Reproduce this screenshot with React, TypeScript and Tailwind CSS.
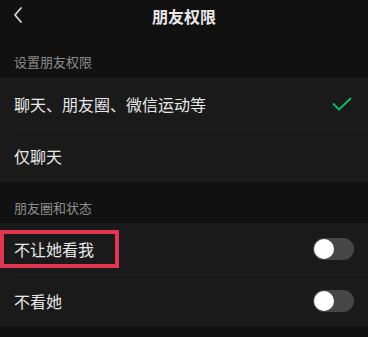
import React from 'react';

const font = { fontFamily: '"Noto Sans CJK SC", "Noto Sans", sans-serif' };

function Toggle() {
  return (
    <div className="w-[41px] h-[22px] rounded-full bg-[#474747] flex items-center px-[1px]">
      <div className="w-[20px] h-[20px] rounded-full bg-white" />
    </div>
  );
}

function Row({ label, right, last }: { label: React.ReactNode; right?: React.ReactNode; last?: boolean }) {
  return (
    <div className="h-[52px] flex items-center justify-between pl-[14px] pr-[14px] relative">
      <span className="text-[16px] text-[#e8e8e8]">{label}</span>
      {right}
      {!last && <div className="absolute bottom-0 left-[14px] right-0 h-px bg-[#222]" />}
    </div>
  );
}

export default function App() {
  return (
    <div className="w-[368px] h-[337px] bg-[#111111] overflow-hidden" style={font}>
      <div className="h-[31px] flex items-center justify-center relative">
        <svg className="absolute left-[12px] top-[6px]" width="12" height="18" viewBox="0 0 12 18" fill="none">
          <path d="M9 2 L3 9 L9 16" stroke="#d8d8d8" strokeWidth="1.8" strokeLinecap="round" strokeLinejoin="round" />
        </svg>
        <span className="text-[16px] font-bold text-[#e8e8e8]">朋友权限</span>
      </div>
      <div className="h-[47px] flex items-end pb-[7px] pl-[14px]">
        <span className="text-[13px] text-[#8c8c8c]">设置朋友权限</span>
      </div>
      <div className="bg-[#1a1a1a]">
        <Row
          label="聊天、朋友圈、微信运动等"
          right={
            <svg width="20" height="14" viewBox="0 0 20 14" fill="none" className="mr-[2px]">
              <path d="M1.5 7 L7 12.5 L18.5 1.5" stroke="#07c160" strokeWidth="1.8" strokeLinecap="round" strokeLinejoin="round" />
            </svg>
          }
        />
        <Row label="仅聊天" last />
      </div>
      <div className="h-[41px] flex items-end pb-[6px] pl-[14px]">
        <span className="text-[13px] text-[#8c8c8c]">朋友圈和状态</span>
      </div>
      <div className="bg-[#1a1a1a]">
        <div className="h-[52px] flex items-center justify-between pr-[14px] relative">
          <div className="ml-0 w-[119px] h-[38px] border-[4px] border-[#e23552] flex items-center pl-[10px]">
            <span className="text-[16px] text-[#e8e8e8]">不让她看我</span>
          </div>
          <Toggle />
          <div className="absolute bottom-0 left-[14px] right-0 h-px bg-[#222]" />
        </div>
        <Row label="不看她" right={<Toggle />} last />
      </div>
    </div>
  );
}
